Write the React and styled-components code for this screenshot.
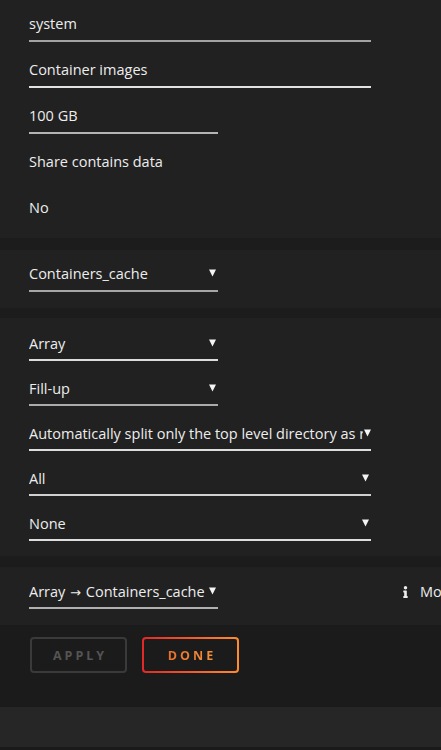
import React from "react";
import styled, { createGlobalStyle } from "styled-components";
import { FaInfo } from "react-icons/fa";

const Global = createGlobalStyle`
  html, body { margin: 0; padding: 0; background: #1b1b1b; }
  body { font-family: "Open Sans", "Noto Sans", sans-serif; color: #e6e6e6; }
  * { box-sizing: border-box; }
`;

const Page = styled.div`
  width: 441px;
  height: 750px;
  overflow: hidden;
  display: flex;
  flex-direction: column;
  background: #1c1c1c;
`;

const Section = styled.section`
  background: #212121;
  padding: ${(p) => p.$pad};
  margin-bottom: ${(p) => p.$mb || "0"};
  display: flex;
  flex-direction: column;
  gap: ${(p) => p.$gap || "0"};
  overflow: hidden;
  flex-shrink: 0;
`;

const Row = styled.div`
  display: flex;
  align-items: flex-start;
  white-space: nowrap;
`;

const Field = styled.div`
  position: relative;
  width: ${(p) => (p.$wide ? "342px" : "189px")};
  height: ${(p) => p.$h}px;
  line-height: ${(p) => p.$h - 2}px;
  font-size: 14.5px;
  color: #ededed;
  border-bottom: 2px solid ${(p) => p.$line || "transparent"};
  white-space: nowrap;
  flex-shrink: 0;
`;

const Value = styled.span`
  display: block;
  overflow: hidden;
  margin-right: ${(p) => (p.$select ? "8px" : "0")};
`;

const ArrowGlyph = styled.span`
  font-family: "DejaVu Sans", sans-serif;
  font-size: 13px;
  padding: 0 1px;
`;

const Arrow = styled.svg`
  position: absolute;
  right: ${(p) => p.$right}px;
  top: ${(p) => (p.$h - 2) / 2 - 5}px;
  width: 7px;
  height: 8px;
`;

const InfoLink = styled.span`
  margin-left: 183px;
  line-height: 30px;
  font-size: 14.5px;
  color: #ededed;
  display: inline-flex;
  align-items: center;
  gap: 10px;
  svg { width: 9px; height: 12px; }
`;

const ButtonBar = styled.div`
  background: #1c1b1c;
  padding: 12px 30px 0;
  height: 82px;
  display: flex;
  gap: 15px;
  flex-shrink: 0;
`;

const Button = styled.button`
  width: 97px;
  height: 36px;
  border-radius: 4px;
  font-family: "Open Sans", sans-serif;
  font-weight: 700;
  font-size: 12.5px;
  letter-spacing: 3px;
  padding: 0 0 0 3px;
  cursor: pointer;
  border: 2px solid ${(p) => (p.$primary ? "transparent" : "#3a3a3a")};
  background: ${(p) =>
    p.$primary
      ? "linear-gradient(#1c1b1c, #1c1b1c) padding-box, linear-gradient(90deg, #e22828, #ff8c2f) border-box"
      : "#1c1b1c"};
  color: #545454;
`;

const GradText = styled.span`
  background: linear-gradient(90deg, #e8702e, #f49338);
  -webkit-background-clip: text;
  background-clip: text;
  color: transparent;
`;

const Footer = styled.div`
  background: #262626;
  height: 43px;
  flex-shrink: 0;
  border-bottom: 3px solid #1a1a1a;
`;

function F({ text, wide, line, select, h = 34, arrowRight = 2 }) {
  return (
    <Field $wide={wide} $line={line} $h={h}>
      <Value $select={select}>{text}</Value>
      {select && (
        <Arrow $h={h} $right={arrowRight} viewBox="0 0 7 8">
          <path d="M0 0.5 H7 L3.5 7.5 Z" fill="#f4f4f4" />
        </Arrow>
      )}
    </Field>
  );
}

export default function App() {
  return (
    <Page>
      <Global />
      <Section $pad="8px 0 12px 29px" $gap="12px" $mb="12px">
        <F text="system" wide line="#a3a3a3" />
        <F text="Container images" wide line="#e2e2e2" />
        <F text="100 GB" line="#b4b4b4" />
        <F text="Share contains data" />
        <F text="No" />
      </Section>
      <Section $pad="8px 0 16px 29px" $mb="10px">
        <F text="Containers_cache" select line="#a6a6a6" />
      </Section>
      <Section $pad="11px 0 15px 29px" $gap="13px" $mb="11px">
        <F text="Array" select line="#dcdcdc" h={32} />
        <F text="Fill-up" select line="#ababab" h={32} />
        <F
          text="Automatically split only the top level directory as required"
          wide
          select
          line="#dedede"
          h={32}
          arrowRight={0}
        />
        <F text="All" wide select line="#d0d0d0" h={32} />
        <F text="None" wide select line="#dedede" h={32} />
      </Section>
      <Section $pad="10px 0 16px 29px">
        <Row>
          <F
            text={
              <>
                Array <ArrowGlyph>→</ArrowGlyph> Containers_cache
              </>
            }
            select
            line="#b0b0b0"
            h={32}
          />
          <InfoLink>
            <FaInfo />
            More information
          </InfoLink>
        </Row>
      </Section>
      <ButtonBar>
        <Button>APPLY</Button>
        <Button $primary>
          <GradText>DONE</GradText>
        </Button>
      </ButtonBar>
      <Footer />
    </Page>
  );
}
